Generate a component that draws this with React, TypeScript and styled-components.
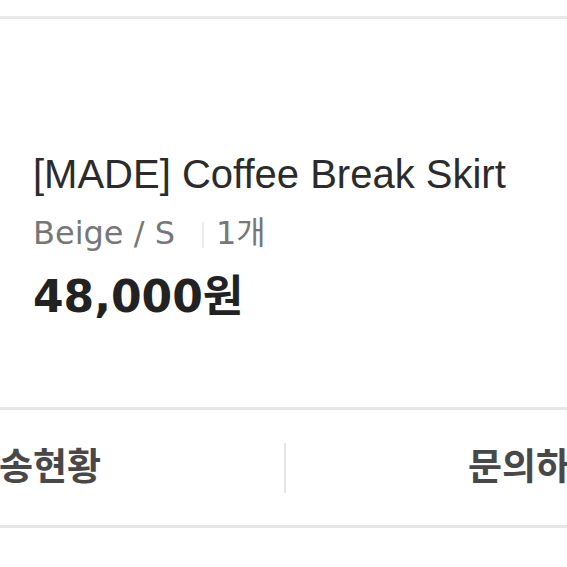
import styled, { createGlobalStyle } from "styled-components";

const GlobalStyle = createGlobalStyle`
    html, body {
        margin: 0;
        padding: 0;
        background: #ffffff;
        overflow: hidden;
    }
    body {
        font-family: "Liberation Sans", "Noto Sans CJK KR", sans-serif;
    }
`;

interface ActionItem {
    label: string;
}

const actions: ActionItem[] = [{ label: "배송현황" }, { label: "문의하기" }];

const App = () => {
    return (
        <>
            <GlobalStyle />
            <Page>
                <OrderCard>
                    <Title>[MADE] Coffee Break Skirt</Title>
                    <OptionRow>
                        <span>Beige / S</span>
                        <Bar />
                        <span>1개</span>
                    </OptionRow>
                    <Price>48,000원</Price>
                </OrderCard>
                <ActionBar>
                    {actions.map((a, i) => (
                        <ActionButton key={a.label} $divided={i > 0}>
                            {a.label}
                        </ActionButton>
                    ))}
                </ActionBar>
            </Page>
        </>
    );
};

const Page = styled.div`
    width: 567px;
    height: 567px;
    padding-top: 16px;
    box-sizing: border-box;
    overflow: hidden;
`;

const OrderCard = styled.div`
    border-top: 3px solid #e8e8e8;
    border-bottom: 3px solid #e6e6e6;
    height: 394px;
    box-sizing: border-box;
    padding: 130px 33px 0;
    display: flex;
    flex-direction: column;
`;

const Title = styled.h1`
    margin: 0;
    font-size: 40px;
    font-weight: normal;
    color: #2b2b2b;
    line-height: 50px;
    white-space: nowrap;
`;

const OptionRow = styled.div`
    display: flex;
    align-items: center;
    margin-top: 13px;
    font-family: "DejaVu Sans", "Noto Sans CJK KR", sans-serif;
    font-size: 32px;
    color: #777777;
    line-height: 42px;
`;

const Bar = styled.i`
    width: 2px;
    height: 26px;
    background: #ececec;
    margin: 4px 12px 0 27px;
`;

const Price = styled.p`
    margin: 17px 0 0;
    font-family: "DejaVu Sans", "Noto Sans CJK KR", sans-serif;
    font-size: 44px;
    font-weight: bold;
    color: #222222;
    line-height: 52px;
`;

const ActionBar = styled.div`
    display: grid;
    grid-template-columns: 1fr 1fr;
    width: 1004px;
    margin-left: -218px;
    height: 115px;
    border-bottom: 3px solid #e6e6e6;
    align-items: center;
`;

const ActionButton = styled.div<{ $divided: boolean }>`
    text-align: center;
    font-size: 37px;
    font-weight: bold;
    color: #484848;
    line-height: 50px;
    border-left: ${(p) => (p.$divided ? "2px solid #e6e6e6" : "none")};
`;

export default App;
